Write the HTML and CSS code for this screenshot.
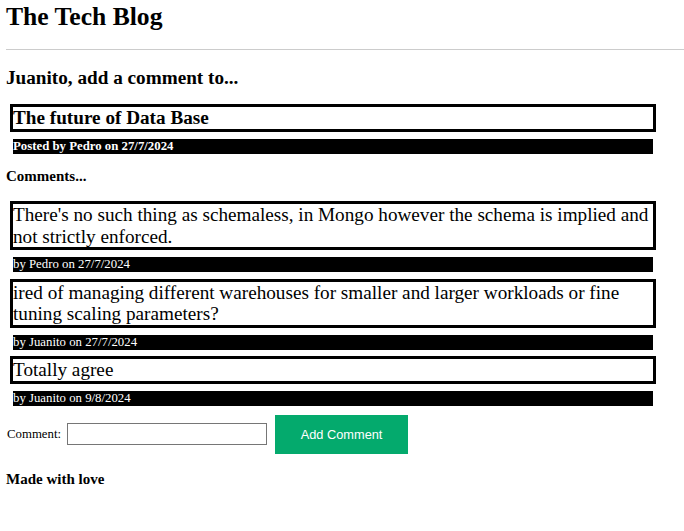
FILE: index.html
```html
<!DOCTYPE html>
<html lang="en">
<head>
<meta charset="utf-8">
<title>The Tech Blog</title>
<link rel="stylesheet" href="styles.css">
</head>
<body>
<header class="site-header">
  <h1 class="site-title">The Tech Blog</h1>
</header>
<main class="page">
  <h2 class="intro">Juanito, add a comment to...</h2>
  <article class="post">
    <h2 class="post-title box">The future of Data Base</h2>
    <div class="meta meta-bold">Posted by Pedro on 27/7/2024</div>
  </article>
  <h3 class="section-title">Comments...</h3>
  <section class="comments">
    <div class="comment">
      <p class="comment-text box">There's no such thing as schemaless, in Mongo however the schema is implied and not strictly enforced.</p>
      <div class="meta">by Pedro on 27/7/2024</div>
    </div>
    <div class="comment">
      <p class="comment-text box">ired of managing different warehouses for smaller and larger workloads or fine tuning scaling parameters?</p>
      <div class="meta">by Juanito on 27/7/2024</div>
    </div>
    <div class="comment">
      <p class="comment-text box">Totally agree</p>
      <div class="meta">by Juanito on 9/8/2024</div>
    </div>
  </section>
  <form class="comment-form">
    <label class="form-label" for="comment">Comment:</label>
    <input class="form-input" id="comment" type="text">
    <button class="form-button" type="button">Add Comment</button>
  </form>
  <h3 class="footer-text">Made with love</h3>
</main>
</body>
</html>
```
FILE: styles.css
```css
html, body {
  margin: 0;
  padding: 0;
  background: #fff;
}
body {
  font-family: "Liberation Serif", "Times New Roman", serif;
  color: #000;
  padding-left: 6px;
}
.site-header {
  padding: 1.5px 0 18px;
  border-bottom: 1px solid #cccccc;
}
.site-title {
  margin: 0;
  font-size: 25.6px;
  line-height: 29.5px;
  font-weight: bold;
}
.page {
  width: 650px;
  padding-top: 16.5px;
}
.intro {
  margin: 0;
  font-size: 19.2px;
  line-height: 22px;
}
.post {
  margin: 15.5px 0 0 4px;
  width: 646px;
}
.box {
  border: 3px solid #000;
  margin: 0;
}
.post-title {
  font-size: 19.2px;
  line-height: 22px;
}
.meta {
  margin: 7px 3px 0;
  background: #000;
  color: #fff;
  font-size: 12.8px;
  line-height: 15px;
  height: 15px;
  white-space: nowrap;
}
.meta-bold {
  font-weight: bold;
}
.section-title {
  margin: 14px 0 0;
  font-size: 15px;
  line-height: 17px;
}
.comments {
  margin: 16px 0 0 4px;
  width: 646px;
  display: flex;
  flex-direction: column;
  gap: 6.5px;
}
.comment-text {
  font-size: 19.2px;
  line-height: 21.5px;
}
.comment-form {
  margin-top: 9px;
  display: flex;
  align-items: center;
}
.form-label {
  font-size: 12.8px;
  margin-left: 1px;
}
.form-input {
  margin: 0 0 0 6px;
  width: 200px;
  height: 22px;
  box-sizing: border-box;
  border: 1px solid #767676;
  padding: 1px 2px;
  font-size: 12.8px;
}
.form-button {
  margin-left: 8px;
  width: 133px;
  height: 39px;
  border: none;
  background: #04AA6D;
  color: #fff;
  font-family: "Liberation Sans", Arial, sans-serif;
  font-size: 12.8px;
  padding: 0;
}
.footer-text {
  margin: 17.5px 0 0;
  font-size: 15px;
  line-height: 17px;
}
```
